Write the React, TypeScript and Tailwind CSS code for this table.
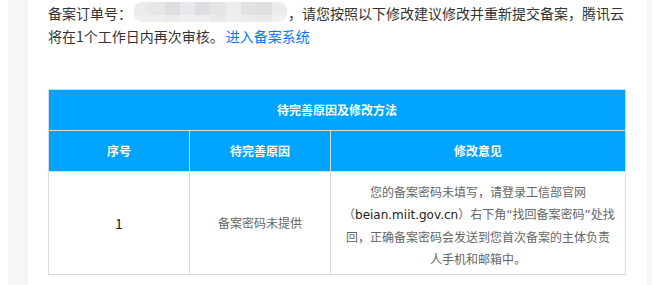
import React from 'react';

// Mosaic tiles used to hide the order number
const maskTop = ['#ebebeb', '#e7e7e7', '#dedede', '#e7e9ec', '#dcdee2', '#e5e5e5', '#ededed', '#e2e2e2', '#e0e0e0', '#ececec'];
const maskBottom = ['#efefef', '#eeeeee', '#ebebeb', '#eef0f1', '#eeeff1', '#e9e9e9', '#f0f0f0', '#ebebeb', '#eaeaea', '#f1f1f1'];

function MaskedNumber() {
  return (
    <span className="ml-[2px] mr-[1px] inline-flex h-[20px] w-[153px] flex-col overflow-hidden rounded-[8px] align-top blur-[0.6px]">
      <span className="flex h-[13px]">
        {maskTop.map((c, i) => (
          <span key={i} className="flex-1" style={{ backgroundColor: c }} />
        ))}
      </span>
      <span className="flex flex-1">
        {maskBottom.map((c, i) => (
          <span key={i} className="flex-1" style={{ backgroundColor: c }} />
        ))}
      </span>
    </span>
  );
}

export default function App() {
  return (
    <div className="min-h-[285px] bg-white pl-[8px] font-['Noto_Sans_CJK_SC','Noto_Sans',sans-serif]">
      <div className="flex min-h-[285px] bg-[#f5f6f8] pl-[20px] pr-[5px]">
        <div className="flex-1 bg-white px-[20px]">
          {/* Notice text */}
          <p className="pt-[2px] text-[14px] leading-[23px] text-[#333]">
            备案订单号：
            <MaskedNumber />
            ，请您按照以下修改建议修改并重新提交备案，腾讯云将在1个工作日内再次审核。
            <a href="#" className="ml-[2px] text-[#0a76ff]">进入备案系统</a>
          </p>

          {/* Review result table */}
          <table className="mt-[41px] w-[578px] table-fixed border-collapse text-center text-[12px]">
            <colgroup>
              <col className="w-[141px]" />
              <col className="w-[141px]" />
              <col />
            </colgroup>
            <thead>
              <tr className="h-[41px] bg-[#00a4ff] font-bold text-white">
                <th colSpan={3} className="border border-[#dcdcdc]">待完善原因及修改方法</th>
              </tr>
              <tr className="h-[41px] bg-[#00a4ff] font-bold text-white">
                <th className="border border-[#dcdcdc]">序号</th>
                <th className="border border-[#dcdcdc]">待完善原因</th>
                <th className="border border-[#dcdcdc]">修改意见</th>
              </tr>
            </thead>
            <tbody>
              <tr>
                <td className="border border-[#dcdcdc] text-[14px] text-[#222]">1</td>
                <td className="border border-[#dcdcdc] text-[#666]">备案密码未提供</td>
                <td className="whitespace-nowrap border border-[#dcdcdc] px-[12px] pb-[4px] pt-[9px] leading-[22px] text-[#666]">
                  您的备案密码未填写，请登录工信部官网
                  <br />
                  （<span className="font-['DejaVu_Sans',sans-serif] text-[#222]">beian.miit.gov.cn</span>）右下角<span className="font-['DejaVu_Sans',sans-serif]">“</span>找回备案密码<span className="font-['DejaVu_Sans',sans-serif]">”</span>处找
                  <br />
                  回，正确备案密码会发送到您首次备案的主体负责
                  <br />
                  人手机和邮箱中。
                </td>
              </tr>
            </tbody>
          </table>
        </div>
      </div>
    </div>
  );
}
